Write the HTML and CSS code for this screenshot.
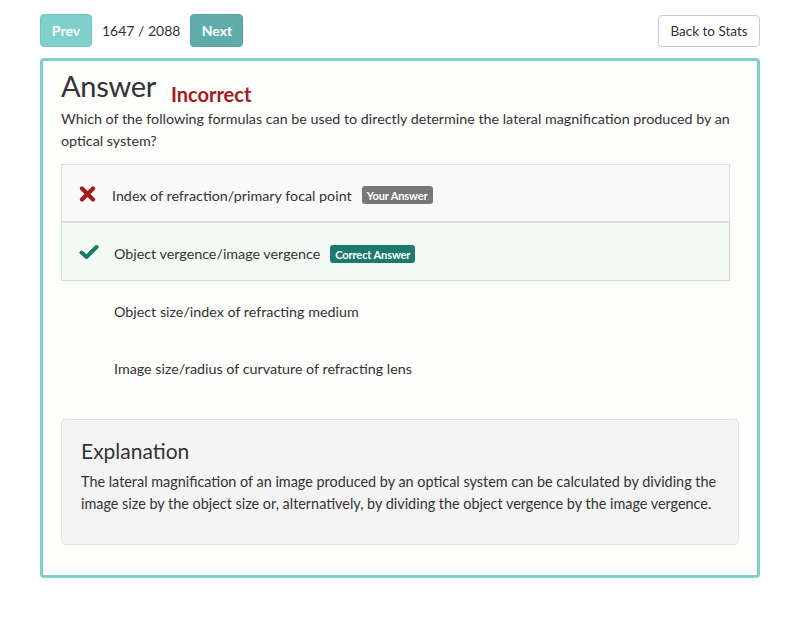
FILE: index.html
```html
<!DOCTYPE html>
<html>
<head>
<meta charset="utf-8">
<link rel="stylesheet" href="styles.css">
</head>
<body>
<div class="page">
  <div class="topbar">
    <div class="nav">
      <button class="btn btn-prev">Prev</button>
      <span class="counter">1647 / 2088</span>
      <button class="btn btn-next">Next</button>
    </div>
    <button class="btn-back">Back to Stats</button>
  </div>
  <div class="card">
    <div class="heading">
      <h1 class="title">Answer</h1>
      <span class="status">Incorrect</span>
    </div>
    <p class="question">Which of the following formulas can be used to directly determine the lateral magnification produced by an optical system?</p>
    <ul class="options">
      <li class="option option-wrong">
        <span class="icon"><svg width="17" height="16" viewBox="0 0 17 16"><path d="M3 2.5 L14 13.5 M14 2.5 L3 13.5" stroke="#a31b1e" stroke-width="4.2" stroke-linecap="round"/></svg></span>
        <span class="text">Index of refraction/primary focal point</span>
        <span class="badge badge-grey">Your Answer</span>
      </li>
      <li class="option option-right">
        <span class="icon icon-check"><svg width="20" height="16" viewBox="0 0 20 16"><path d="M2.5 8.5 L7.5 13 L17.5 3" fill="none" stroke="#1c7a6c" stroke-width="4" stroke-linecap="round" stroke-linejoin="round"/></svg></span>
        <span class="text">Object vergence/image vergence</span>
        <span class="badge badge-green">Correct Answer</span>
      </li>
      <li class="option option-plain">
        <span class="icon icon-check"></span>
        <span class="text">Object size/index of refracting medium</span>
      </li>
      <li class="option option-plain">
        <span class="icon icon-check"></span>
        <span class="text">Image size/radius of curvature of refracting lens</span>
      </li>
    </ul>
    <div class="explanation">
      <h2 class="exp-title">Explanation</h2>
      <p class="exp-text">The lateral magnification of an image produced by an optical system can be calculated by dividing the image size by the object size or, alternatively, by dividing the object vergence by the image vergence.</p>
    </div>
  </div>
</div>
</body>
</html>
```

FILE: styles.css
```css
* { box-sizing: border-box; }
body {
  margin: 0;
  background: #ffffff;
  font-family: Lato, "Open Sans", sans-serif;
  color: #333;
}
.page {
  width: 720px;
  margin-left: 40px;
  padding-top: 14px;
}
.topbar {
  display: flex;
  justify-content: space-between;
  align-items: flex-start;
}
.nav {
  display: flex;
  align-items: center;
  gap: 10px;
}
.btn {
  height: 33px;
  border: 1px solid transparent;
  border-radius: 4px;
  color: #fff;
  font-family: Lato, sans-serif;
  font-weight: bold;
  font-size: 14px;
  padding: 0 10px;
}
.btn-prev { background: #7fcfcd; border-color: #77c5c3; width: 52px; }
.btn-next { background: #5fadaa; border-color: #58a4a1; width: 53px; }
.counter { font-size: 14px; color: #333; }
.btn-back {
  margin-top: 1px;
  height: 32px;
  width: 102px;
  background: #fff;
  border: 1px solid #ccc;
  border-radius: 4px;
  font-family: Lato, sans-serif;
  font-size: 13.5px;
  color: #333;
  padding: 0;
}
.card {
  margin-top: 11px;
  border: 3px solid #7fcfcd;
  border-radius: 4px;
  background: #fdfdfb;
  padding: 7px 18px 31px 18px;
  height: 520px;
}
.heading {
  display: flex;
  align-items: baseline;
  gap: 15px;
}
.title {
  margin: 0;
  font-size: 29px;
  letter-spacing: -0.3px;
  font-weight: normal;
  color: #333;
  line-height: 36px;
}
.status {
  font-size: 20px;
  font-weight: bold;
  color: #a31b1e;
  position: relative;
  top: 5px;
}
.question {
  margin: 4px 0 0;
  font-size: 14.3px;
  line-height: 22px;
  color: #333;
}
.options {
  list-style: none;
  margin: 12px 9px 0 0;
  padding: 0;
}
.option {
  display: flex;
  align-items: center;
  height: 57px;
  padding-left: 17px;
  padding-top: 4px;
  font-size: 14.3px;
  border: 1px solid transparent;
}
.option-wrong {
  background: #f9f9fa;
  border-color: #dddddd;
  height: 58px;
}
.option-right {
  background: #f3f9f3;
  border-color: #cce3cc;
  border-top-color: #d0e4d0;
  height: 59px;
}
.icon {
  width: 33px;
  display: flex;
  align-items: center;
  margin-top: -3px;
}
.icon-check { width: 35px; }
.text { color: #333; }
.badge {
  margin-left: 10px;
  font-size: 11px;
  font-weight: bold;
  color: #fff;
  padding: 3px 5px 2px;
  border-radius: 3px;
  line-height: 13px;
  letter-spacing: -0.1px;
}
.badge-grey { background: #777; }
.badge-green { background: #1c7a6c; }
.explanation {
  margin-top: 24px;
  background: #f4f4f5;
  border: 1px solid #e3e3e3;
  border-radius: 4px;
  padding: 18px 10px 29px 19px;
}
.exp-title {
  margin: 0 0 7px;
  font-size: 21px;
  font-weight: normal;
  color: #333;
  line-height: 26px;
}
.exp-text {
  margin: 0;
  font-size: 14.4px;
  line-height: 22px;
  color: #333;
}
```
